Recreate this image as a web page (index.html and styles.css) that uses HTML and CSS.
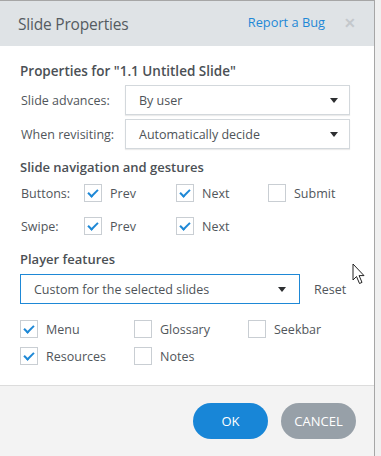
FILE: index.html
```html
<!DOCTYPE html>
<html>
<head>
<meta charset="utf-8">
<link rel="stylesheet" href="styles.css">
</head>
<body>
<div class="dialog">
  <div class="header">
    <div class="title">Slide Properties</div>
    <a class="bug">Report a Bug</a>
    <span class="close">&#x2715;</span>
  </div>
  <div class="content">
    <div class="h1">Properties for "1.1 Untitled Slide"</div>
    <div class="field">
      <span class="label">Slide advances:</span>
      <div class="select"><span>By user</span><i class="arrow"></i></div>
    </div>
    <div class="field">
      <span class="label">When revisiting:</span>
      <div class="select"><span>Automatically decide</span><i class="arrow"></i></div>
    </div>
    <div class="h2 nav">Slide navigation and gestures</div>
    <div class="navrow first">
      <span class="label">Buttons:</span>
      <label class="cb"><i class="box on"></i>Prev</label>
      <label class="cb"><i class="box on"></i>Next</label>
      <label class="cb"><i class="box"></i>Submit</label>
    </div>
    <div class="navrow">
      <span class="label">Swipe:</span>
      <label class="cb"><i class="box on"></i>Prev</label>
      <label class="cb"><i class="box on"></i>Next</label>
    </div>
    <div class="h2 pf">Player features</div>
    <div class="pfrow">
      <div class="select focus"><span>Custom for the selected slides</span><i class="arrow"></i></div>
      <span class="reset">Reset</span>
    </div>
    <div class="features">
      <label class="cb"><i class="box on"></i>Menu</label>
      <label class="cb"><i class="box"></i>Glossary</label>
      <label class="cb"><i class="box"></i>Seekbar</label>
      <label class="cb"><i class="box on"></i>Resources</label>
      <label class="cb"><i class="box"></i>Notes</label>
    </div>
  </div>
  <div class="footer">
    <button class="btn ok">OK</button>
    <button class="btn cancel">CANCEL</button>
  </div>
</div>
<svg class="cursor" width="14" height="22" viewBox="0 0 14 22">
  <path d="M1 1 L1 17 L4.5 13.5 L7.5 20.5 L10 19.4 L7.1 12.6 L12 12.6 Z" fill="#fff" stroke="#222" stroke-width="1" stroke-linejoin="miter"/>
</svg>
</body>
</html>
```
FILE: styles.css
```css
html, body {
  margin: 0;
  padding: 0;
}
body {
  width: 381px;
  height: 456px;
  overflow: hidden;
  background: #f0f0f0;
  font-family: "Open Sans", "Noto Sans", sans-serif;
  color: #51565b;
  position: relative;
}
.dialog {
  width: 375px;
  height: 456px;
  box-sizing: border-box;
  border-top: 1px solid #a6a6a6;
  border-right: 1px solid #a6a6a6;
  background: #fff;
  display: flex;
  flex-direction: column;
}
.header {
  height: 45px;
  flex: none;
  background: #dfe3e6;
  display: flex;
  align-items: center;
  padding: 0 0 0 18px;
}
.title {
  font-size: 15.5px;
  letter-spacing: -0.2px;
  color: #555b61;
  flex: 1;
}
.bug {
  font-size: 12.8px;
  color: #1e88d6;
  margin-right: 19px;
  padding-bottom: 3px;
}
.close {
  color: #c4c8cc;
  font-size: 14px;
  margin-right: 18px;
  padding-bottom: 3px;
  font-weight: bold;
}
.content {
  flex: 1;
  padding: 14px 24px 0 20px;
  font-size: 12.5px;
}
.h1 {
  font-size: 13.5px;
  font-weight: 600;
  color: #4b5055;
  height: 22px;
  line-height: 22px;
  margin-bottom: 3px;
}
.h2 {
  font-size: 13px;
  font-weight: 600;
  color: #4b5055;
  height: 20px;
  line-height: 20px;
}
.field {
  display: flex;
  align-items: center;
  height: 30px;
  margin-bottom: 4px;
}
.field .label {
  width: 104px;
  flex: none;
  padding-left: 1px;
}
.select {
  flex: 1;
  height: 30px;
  box-sizing: border-box;
  border: 1px solid #d3d8dc;
  box-shadow: 0 1px 1px rgba(0,0,0,0.08);
  display: flex;
  align-items: center;
  padding: 0 11px 0 13px;
  color: #4e5358;
}
.select span {
  flex: 1;
}
.arrow {
  width: 0;
  height: 0;
  border-left: 4.5px solid transparent;
  border-right: 4.5px solid transparent;
  border-top: 5px solid #2d2f31;
}
.h2.nav {
  margin-top: 8px;
  margin-bottom: 7px;
}
.navrow {
  display: grid;
  grid-template-columns: 64px 92px 92px 80px;
  align-items: center;
  height: 18px;
  margin-bottom: 14px;
}
.navrow.first {
  margin-bottom: 15px;
}
.navrow .label {
  padding-left: 1px;
}
.cb {
  display: flex;
  align-items: center;
  gap: 8px;
  white-space: nowrap;
}
.box {
  width: 18px;
  height: 18px;
  box-sizing: border-box;
  border: 1px solid #c9ced3;
  flex: none;
  position: relative;
}
.box.on::after {
  content: "";
  position: absolute;
  left: 5px;
  top: 2px;
  width: 4px;
  height: 8px;
  border-right: 2px solid #1e88d6;
  border-bottom: 2px solid #1e88d6;
  transform: rotate(45deg);
}
.h2.pf {
  margin-top: 5px;
  margin-bottom: 5px;
}
.pfrow {
  display: flex;
  align-items: center;
  height: 30px;
  gap: 14px;
}
.pfrow .select {
  flex: none;
  width: 280px;
  padding: 0 13px 0 13px;
}
.select.focus {
  border-color: #1e88d6;
  box-shadow: none;
}
.reset {
  color: #51565b;
}
.features {
  display: grid;
  grid-template-columns: 114px 114px 100px;
  grid-auto-rows: 18px;
  row-gap: 9px;
  align-items: center;
  margin-top: 16px;
}
.footer {
  height: 71px;
  box-sizing: border-box;
  flex: none;
  background: #f3f3f3;
  border-top: 1px solid #dcdcdc;
  display: flex;
  justify-content: flex-end;
  align-items: flex-start;
  padding: 17px 18px 0 0;
  gap: 13px;
}
.btn {
  width: 75px;
  height: 36px;
  border-radius: 18px;
  border: none;
  color: #fff;
  font-family: "Open Sans", "Noto Sans", sans-serif;
  font-size: 13px;
  padding: 0;
}
.ok {
  background: #1886d7;
}
.cancel {
  background: #97a0a8;
}
.cursor {
  position: absolute;
  left: 352px;
  top: 263px;
}
```
